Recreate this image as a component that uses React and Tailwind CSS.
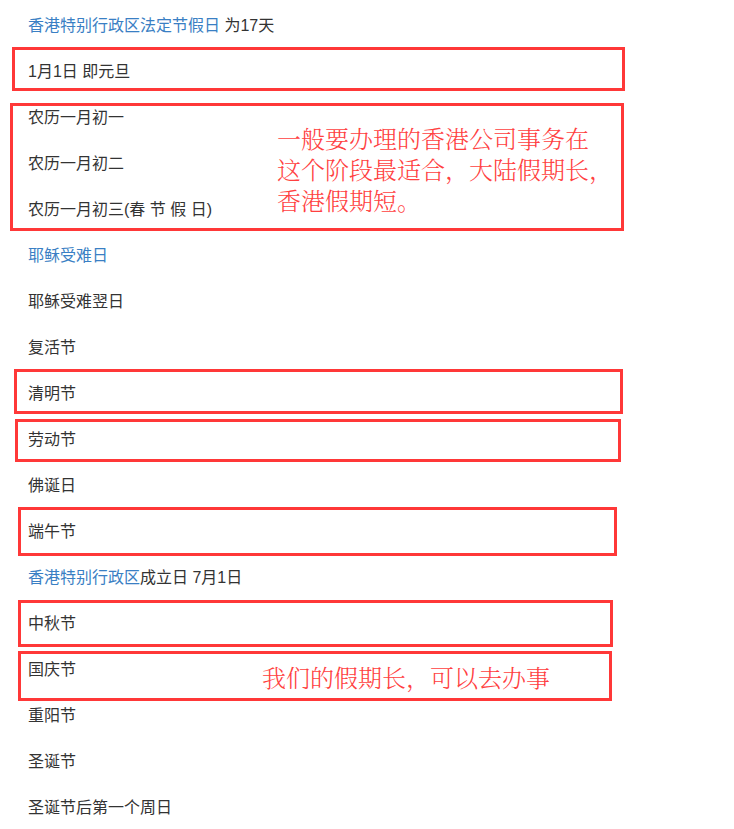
import React from "react";

const blue = "text-[#3a7fc4]";

const rows = [
  [{ t: "香港特别行政区法定节假日", link: true }, { t: " 为17天" }],
  [{ t: "1月1日 即元旦" }],
  [{ t: "农历一月初一" }],
  [{ t: "农历一月初二" }],
  [{ t: "农历一月初三(春 节 假 日)" }],
  [{ t: "耶稣受难日", link: true }],
  [{ t: "耶稣受难翌日" }],
  [{ t: "复活节" }],
  [{ t: "清明节" }],
  [{ t: "劳动节" }],
  [{ t: "佛诞日" }],
  [{ t: "端午节" }],
  [{ t: "香港特别行政区", link: true }, { t: "成立日 7月1日" }],
  [{ t: "中秋节" }],
  [{ t: "国庆节" }],
  [{ t: "重阳节" }],
  [{ t: "圣诞节" }],
  [{ t: "圣诞节后第一个周日" }],
];

// red annotation boxes drawn over the list: left, top, width, height
const boxes = [
  "left-[12px] top-[47px] w-[613px] h-[44px]",
  "left-[10px] top-[103px] w-[614px] h-[128px]",
  "left-[14px] top-[369px] w-[609px] h-[45px]",
  "left-[15px] top-[419px] w-[606px] h-[43px]",
  "left-[18px] top-[507px] w-[599px] h-[49px]",
  "left-[18px] top-[600px] w-[595px] h-[47px]",
  "left-[18px] top-[651px] w-[594px] h-[50px]",
];

const note = "font-['Noto_Serif_CJK_SC','Noto_Sans_CJK_SC',serif] text-[24px] text-[#ff4040] font-light";

export default function App() {
  return (
    <div className="relative w-[734px] h-[829px] bg-white overflow-hidden font-['Liberation_Sans','Noto_Sans_CJK_SC',sans-serif]">
      <div className="flex flex-col pt-[3px]">
        {rows.map((parts, i) => (
          <div key={i} className="h-[46px] flex items-center pl-[28px] text-[16px] text-[#333] whitespace-pre">
            {parts.map((p, j) => (
              <span key={j} className={p.link ? blue : ""}>{p.t}</span>
            ))}
          </div>
        ))}
      </div>

      {boxes.map((b, i) => (
        <div key={i} className={`absolute border-[3px] border-[#ff3838] ${b}`} />
      ))}

      <div className={`absolute left-[277px] top-[122px] leading-[31px] ${note}`}>
        <div>一般要办理的香港公司事务在</div>
        <div>这个阶段最适合，大陆假期长，</div>
        <div>香港假期短。</div>
      </div>
      <div className={`absolute left-[262px] top-[661px] leading-[31px] ${note}`}>
        我们的假期长，可以去办事
      </div>
    </div>
  );
}
